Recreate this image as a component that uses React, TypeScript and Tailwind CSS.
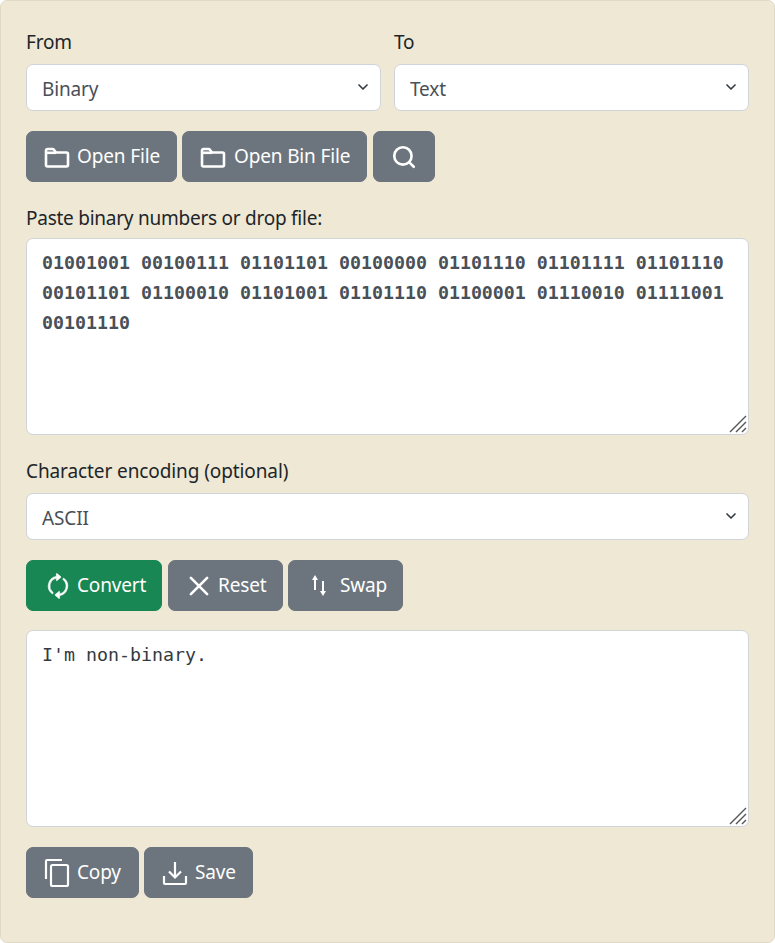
import { ChevronDown, Search } from "lucide-react";
import type { ReactNode } from "react";

const binary =
  "01001001 00100111 01101101 00100000 01101110 01101111 01101110 00101101 01100010 01101001 01101110 01100001 01110010 01111001 00101110";

function Folder() {
  return (
    <svg viewBox="0 0 26 22" fill="none" stroke="currentColor" strokeWidth="2.6" strokeLinejoin="round" className="w-[26px] h-[22px] shrink-0">
      <path d="M2 4.5V19a1.5 1.5 0 0 0 1.5 1.5h19A1.5 1.5 0 0 0 24 19V8a1.5 1.5 0 0 0-1.5-1.5H12L9.5 3.2A1 1 0 0 0 8.7 3H3.5A1.5 1.5 0 0 0 2 4.5z" />
      <path d="M2 6.8h10" />
    </svg>
  );
}

function Refresh() {
  return (
    <svg viewBox="0 0 16 16" fill="currentColor" stroke="currentColor" strokeWidth="0.4" className="w-[26px] h-[26px] shrink-0">
      <g transform="rotate(90 8 8)">
        <path d="M11.534 7h3.932a.25.25 0 0 1 .192.41l-1.966 2.36a.25.25 0 0 1-.384 0l-1.966-2.36a.25.25 0 0 1 .192-.41zm-11 2h3.932a.25.25 0 0 0 .192-.41L2.692 6.23a.25.25 0 0 0-.384 0L.342 8.59A.25.25 0 0 0 .534 9z" />
        <path fillRule="evenodd" d="M8 3c-1.552 0-2.94.707-3.857 1.818a.5.5 0 1 1-.771-.636A6.002 6.002 0 0 1 13.917 7H12.9A5.002 5.002 0 0 0 8 3zM3.1 9a5.002 5.002 0 0 0 8.757 2.182.5.5 0 1 1 .771.636A6.002 6.002 0 0 1 2.083 9H3.1z" />
      </g>
    </svg>
  );
}

function Cross() {
  return (
    <svg viewBox="0 0 16 16" fill="none" stroke="currentColor" strokeWidth="1.6" strokeLinecap="round" className="w-[26px] h-[26px] shrink-0">
      <path d="M3 3 13 13M13 3 3 13" />
    </svg>
  );
}

function SwapIcon() {
  return (
    <svg viewBox="0 0 14 21" className="w-[14px] h-[21px] shrink-0">
      <path d="M3 4v11M11 6v11" stroke="currentColor" strokeWidth="2" fill="none" />
      <path d="M3 0 0 5h6zM11 21l3-5H8z" fill="currentColor" />
    </svg>
  );
}

function CopyIcon() {
  return (
    <svg viewBox="0 0 26 30" fill="none" stroke="currentColor" strokeWidth="2.2" className="w-[26px] h-[30px] shrink-0">
      <path d="M18 2H3a1 1 0 0 0-1 1v18" />
      <rect x="7" y="7" width="17" height="21" rx="1.5" />
    </svg>
  );
}

function SaveIcon() {
  return (
    <svg viewBox="0 0 26 26" fill="none" stroke="currentColor" strokeWidth="2.2" className="w-[26px] h-[26px] shrink-0">
      <path d="M13 2v15M7 11.5l6 6 6-6" />
      <path d="M2 16v7a1 1 0 0 0 1 1h20a1 1 0 0 0 1-1v-7" />
    </svg>
  );
}

function Btn({ children, className }: { children: ReactNode; className: string }) {
  return (
    <button className={`h-[51px] rounded-[7px] border border-[#6c757d] bg-[#6c757d] text-white flex items-center ${className}`}>
      {children}
    </button>
  );
}

function Select({ value }: { value: string }) {
  return (
    <div className="relative">
      <select
        defaultValue={value}
        className="w-full h-[47px] appearance-none rounded-[7px] border border-[#ced4da] bg-white pl-[15px] pt-[4px] text-[#495057] outline-none"
      >
        <option>{value}</option>
      </select>
      <ChevronDown size={16} strokeWidth={2.5} className="absolute right-[10px] top-[15px] text-[#343a40] pointer-events-none" />
    </div>
  );
}

function Output({ value, bold }: { value: string; bold?: boolean }) {
  return (
    <div className="relative h-[197px]">
      <textarea
        readOnly
        value={value}
        className={`block w-full h-full resize-none rounded-[7px] border border-[#ced4da] bg-white pl-[15px] pr-[15px] pt-[9px] text-[18.27px] leading-[30px] tracking-normal outline-none [font-family:'DejaVu_Sans_Mono',monospace] ${bold ? "font-bold text-[#495057]" : "text-[#343a40]"}`}
      />
      <svg viewBox="0 0 20 20" stroke="#555" strokeWidth="1.4" className="absolute right-[1px] bottom-[1px] w-5 h-5 pointer-events-none">
        <path d="M2 18 18 2M8 18 18 8M14 18l4-4" />
      </svg>
    </div>
  );
}

export default function App() {
  return (
    <div className="min-h-[943px] rounded-[7px] border border-[#e0d9c6] bg-[#eee8d5] px-[25px] pt-[25px] text-[19px] tracking-[-0.15px] text-[#212529] [font-family:'Noto_Sans',sans-serif]">
      <div className="grid grid-cols-2 gap-[13px]">
        <div>
          <p className="h-[38px] leading-[32px]">From</p>
          <Select value="Binary" />
        </div>
        <div>
          <p className="h-[38px] leading-[32px]">To</p>
          <Select value="Text" />
        </div>
      </div>

      <div className="flex mt-[20px]">
        <Btn className="w-[151px] pl-[17px] gap-[7px]"><Folder />Open File</Btn>
        <Btn className="w-[185px] ml-[5px] pl-[17px] gap-[8px]"><Folder />Open Bin File</Btn>
        <Btn className="w-[62px] ml-[6px] justify-center"><Search size={26} strokeWidth={2.4} /></Btn>
      </div>

      <p className="mt-[20px] h-[36px] leading-[32px] tracking-[-0.25px]">Paste binary numbers or drop file:</p>
      <Output value={binary} bold />

      <p className="mt-[20px] h-[38px] leading-[32px] tracking-[-0.1px]">Character encoding (optional)</p>
      <Select value="ASCII" />

      <div className="flex mt-[20px]">
        <Btn className="w-[136px] pl-[18px] gap-[6px] !bg-[#198754] !border-[#198754]"><Refresh />Convert</Btn>
        <Btn className="w-[115px] ml-[6px] pl-[17px] gap-[6px]"><Cross />Reset</Btn>
        <Btn className="w-[115px] ml-[5px] pl-[23px] gap-[14px]"><SwapIcon />Swap</Btn>
      </div>

      <div className="mt-[19px]">
        <Output value="I'm non-binary." />
      </div>

      <div className="flex gap-[5px] mt-[20px]">
        <Btn className="w-[113px] pl-[17px] gap-[7px]"><CopyIcon />Copy</Btn>
        <Btn className="w-[109px] pl-[17px] gap-[7px]"><SaveIcon />Save</Btn>
      </div>
    </div>
  );
}
